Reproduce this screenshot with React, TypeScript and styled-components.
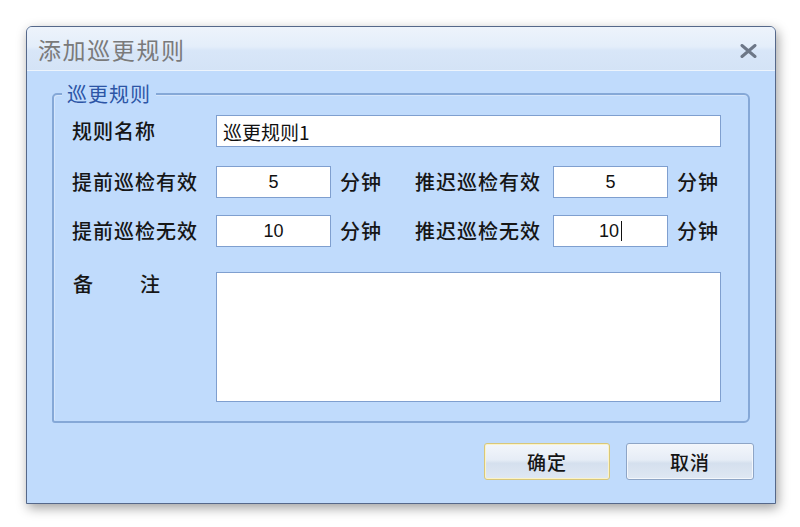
import React from "react";
import styled, { createGlobalStyle } from "styled-components";

const GlobalStyle = createGlobalStyle`
  body {
    margin: 0;
    background: #ffffff;
    font-family: "Noto Sans CJK SC", "Liberation Sans", sans-serif;
  }
`;

const CJK = `"Noto Sans CJK SC", "Liberation Sans", sans-serif`;
const NUM = `"Liberation Sans", "Noto Sans CJK SC", sans-serif`;

const App = () => {
  return (
    <Page>
      <GlobalStyle />
      <Dialog>
        <TitleBar>
          <Title>添加巡更规则</Title>
          <CloseButton aria-label="关闭">
            <svg width="17" height="14" viewBox="0 0 17 14">
              <path d="M2 1.5 L15 12.5 M15 1.5 L2 12.5" stroke="#6d7787" strokeWidth="3" strokeLinecap="round" />
            </svg>
          </CloseButton>
        </TitleBar>

        <Body>
          <GroupBox>
            <Legend>巡更规则</Legend>

            <Row mt={20}>
              <Label>规则名称</Label>
              <Field wide align="left">巡更规则1</Field>
            </Row>

            <Row mt={19}>
              <Label>提前巡检有效</Label>
              <Field>5</Field>
              <Unit>分钟</Unit>
              <Label narrow>推迟巡检有效</Label>
              <Field>5</Field>
              <Unit>分钟</Unit>
            </Row>

            <Row mt={17}>
              <Label>提前巡检无效</Label>
              <Field>10</Field>
              <Unit>分钟</Unit>
              <Label narrow>推迟巡检无效</Label>
              <Field>
                10<Caret />
              </Field>
              <Unit>分钟</Unit>
            </Row>

            <Row mt={25} top>
              <Label>
                <Spread>
                  <span>备</span>
                  <span>注</span>
                </Spread>
              </Label>
              <Memo />
            </Row>
          </GroupBox>

          <ButtonBar>
            <Button primary>确定</Button>
            <Button>取消</Button>
          </ButtonBar>
        </Body>
      </Dialog>
    </Page>
  );
};

export default App;

// Styled Components
const Page = styled.div`
  width: 800px;
  height: 527px;
  padding: 26px 0 0 26px;
  box-sizing: border-box;
  overflow: hidden;
`;

const Dialog = styled.div`
  width: 750px;
  box-sizing: border-box;
  border: 1px solid #55688a;
  border-radius: 6px 6px 0 0;
  background: #c0dbfc;
  box-shadow: 2px 4px 12px rgba(0, 0, 0, 0.38);
`;

const TitleBar = styled.div`
  height: 43px;
  display: flex;
  align-items: center;
  justify-content: space-between;
  padding: 0 18px 0 11px;
  border-radius: 5px 5px 0 0;
  border-bottom: 1px solid #edf4fc;
  background: linear-gradient(to bottom, #edf3fb 0%, #e4eefa 45%, #d8e6f8 55%, #d4e3f6 100%);
`;

const Title = styled.div`
  font-family: ${CJK};
  font-size: 23px;
  letter-spacing: 1.6px;
  color: #7a7a7a;
  line-height: 1;
  margin-top: 2px;
`;

const CloseButton = styled.div`
  display: flex;
  align-items: center;
  margin-top: 5px;
`;

const Body = styled.div`
  padding: 22px 25px 23px 25px;
`;

const GroupBox = styled.div`
  position: relative;
  height: 330px;
  box-sizing: border-box;
  border: 2px solid #85a8d7;
  border-radius: 5px 6px 6px 3px;
  padding: 0 0 0 18px;
  box-shadow: inset 1px 1px 0 #d4e5fb;
`;

const Legend = styled.div`
  position: absolute;
  top: -13px;
  left: 8px;
  padding: 0 5px 0 5px;
  background: #c0dbfc;
  font-family: ${CJK};
  font-size: 20px;
  letter-spacing: 1px;
  line-height: 24px;
  color: #2c55a6;
`;

const Row = styled.div<{ mt: number; top?: boolean }>`
  display: flex;
  align-items: ${({ top }) => (top ? "flex-start" : "center")};
  margin-top: ${({ mt }) => mt}px;
`;

const Label = styled.div<{ narrow?: boolean }>`
  width: ${({ narrow }) => (narrow ? 138 : 144)}px;
  flex-shrink: 0;
  font-family: ${CJK};
  font-size: 20px;
  font-weight: 500;
  letter-spacing: 1px;
  line-height: 24px;
  color: #161616;
`;

const Spread = styled.div`
  display: flex;
  justify-content: space-between;
  width: 88px;
  padding-left: 1px;
`;

const Field = styled.div<{ wide?: boolean; align?: string }>`
  width: ${({ wide }) => (wide ? 505 : 115)}px;
  height: 32px;
  box-sizing: border-box;
  flex-shrink: 0;
  display: flex;
  align-items: center;
  justify-content: ${({ align }) => (align === "left" ? "flex-start" : "center")};
  padding: 0 6px;
  background: #ffffff;
  border: 1px solid #7f9fcf;
  font-family: ${({ align }) => (align === "left" ? CJK : NUM)};
  font-size: ${({ align }) => (align === "left" ? "19px" : "18px")};
  color: #111111;
`;

const Caret = styled.span`
  display: inline-block;
  width: 1px;
  height: 20px;
  margin-left: 2px;
  background: #111111;
`;

const Unit = styled.div`
  width: 84px;
  flex-shrink: 0;
  padding-left: 9px;
  box-sizing: border-box;
  font-family: ${CJK};
  font-size: 20px;
  font-weight: 500;
  letter-spacing: 1px;
  line-height: 24px;
  color: #161616;
`;

const Memo = styled.div`
  width: 505px;
  height: 130px;
  box-sizing: border-box;
  background: #ffffff;
  border: 1px solid #7f9fcf;
`;

const ButtonBar = styled.div`
  display: flex;
  justify-content: flex-end;
  gap: 16px;
  margin-top: 20px;
  margin-right: -4px;
`;

const Button = styled.div<{ primary?: boolean }>`
  width: ${({ primary }) => (primary ? 126 : 128)}px;
  height: 37px;
  box-sizing: border-box;
  display: flex;
  align-items: center;
  justify-content: center;
  border-radius: 3px;
  border: 1px solid ${({ primary }) => (primary ? "#d8c77a" : "#8ea5c6")};
  box-shadow: inset 0 0 0 1px ${({ primary }) => (primary ? "#fbf3c8" : "#f3f7fc")};
  background: linear-gradient(to bottom, #f3f6fb 0%, #e6edf6 45%, #d5e0ee 55%, #dfe8f3 100%);
  font-family: ${CJK};
  font-size: 19px;
  font-weight: 500;
  letter-spacing: 1px;
  color: #151515;
  cursor: pointer;
`;
